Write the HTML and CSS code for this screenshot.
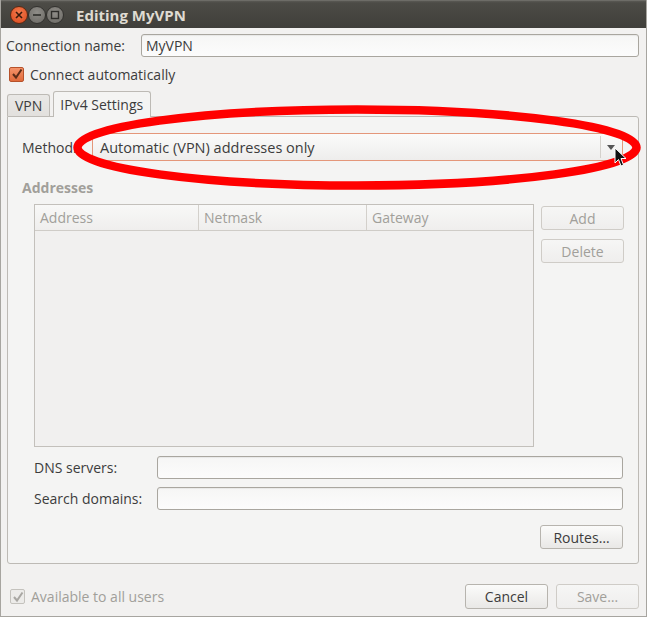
FILE: index.html
```html
<!DOCTYPE html>
<html>
<head>
<meta charset="utf-8">
<link rel="stylesheet" href="styles.css">
</head>
<body>
<div class="window">
  <div class="titlebar">
    <div class="wbtns">
      <span class="wbtn close"><svg width="18" height="18" viewBox="0 0 18 18"><path d="M6 6 L12 12 M12 6 L6 12" stroke="#3a1a0c" stroke-width="1.6"/></svg></span>
      <span class="wbtn"><svg width="18" height="18" viewBox="0 0 18 18"><path d="M5 9 H13" stroke="#2e2d2a" stroke-width="1.6"/></svg></span>
      <span class="wbtn"><svg width="18" height="18" viewBox="0 0 18 18"><rect x="5.5" y="5.5" width="7" height="7" fill="none" stroke="#2e2d2a" stroke-width="1.4"/></svg></span>
    </div>
    <div class="title">Editing MyVPN</div>
  </div>
  <div class="content">
    <div class="row name-row">
      <label class="lbl">Connection name:</label>
      <div class="entry name-entry">MyVPN</div>
    </div>
    <div class="row check-row">
      <span class="check on"><svg width="14" height="14" viewBox="0 0 14 14"><path d="M3 7 L6 10.5 L11.5 2.5" fill="none" stroke="#5b2c18" stroke-width="2"/></svg></span>
      <span class="check-text">Connect automatically</span>
    </div>
    <div class="tabs">
      <div class="tab">VPN</div>
      <div class="tab active">IPv4 Settings</div>
    </div>
    <div class="panel">
      <div class="row method-row">
        <label class="lbl">Method:</label>
        <div class="combo">
          <span class="combo-text">Automatic (VPN) addresses only</span>
          <span class="combo-sep"></span>
          <span class="combo-arrow"></span>
        </div>
      </div>
      <div class="section-title">Addresses</div>
      <div class="addr-area">
        <div class="table">
          <div class="thead">
            <div class="th c1">Address</div>
            <div class="th c2">Netmask</div>
            <div class="th c3">Gateway</div>
          </div>
        </div>
        <div class="side-btns">
          <div class="btn disabled">Add</div>
          <div class="btn disabled">Delete</div>
        </div>
      </div>
      <div class="row field-row dns-row">
        <label class="lbl field-lbl">DNS servers:</label>
        <div class="entry field-entry"></div>
      </div>
      <div class="row field-row">
        <label class="lbl field-lbl">Search domains:</label>
        <div class="entry field-entry"></div>
      </div>
      <div class="routes-row">
        <div class="btn">Routes…</div>
      </div>
    </div>
    <div class="bottom-row">
      <div class="avail">
        <span class="check off"><svg width="14" height="14" viewBox="0 0 14 14"><path d="M3 7 L6 10.5 L11.5 2.5" fill="none" stroke="#a9a7a3" stroke-width="2"/></svg></span>
        <span class="check-text dim">Available to all users</span>
      </div>
      <div class="actions">
        <div class="btn action">Cancel</div>
        <div class="btn action disabled">Save…</div>
      </div>
    </div>
  </div>
</div>
<svg class="overlay" width="647" height="617" viewBox="0 0 647 617">
  <ellipse cx="357" cy="147.5" rx="279.5" ry="38" fill="none" stroke="#ff0000" stroke-width="8.5"/>
</svg>
<svg class="cursor" width="14" height="22" viewBox="0 0 14 22">
  <path d="M1 1 L1 16 L4.5 12.5 L7 19 L9.5 18 L7 11.5 L12 11.5 Z" fill="#111" stroke="#fff" stroke-width="1"/>
</svg>
</body>
</html>
```
FILE: styles.css
```css
* { box-sizing: border-box; }
html, body { margin: 0; padding: 0; }
body {
  width: 647px;
  height: 617px;
  overflow: hidden;
  position: relative;
  font-family: "Open Sans", "DejaVu Sans", sans-serif;
  font-size: 14px;
  color: #3c3c3c;
  background: #f2f1f0;
}
.window {
  width: 647px;
  height: 617px;
  display: flex;
  flex-direction: column;
  border-left: 1px solid #a7a5a0;
  border-right: 1px solid #a7a5a0;
  border-bottom: 1px solid #a7a5a0;
}
.titlebar {
  height: 28px;
  flex: none;
  display: flex;
  align-items: center;
  background: linear-gradient(#5a5954 0px, #4c4b46 2px, #3f3e3a 28px);
  border-top: 1px solid #6d6c67;
}
.wbtns { display: flex; margin-left: 9px; }
.wbtn {
  width: 18px;
  height: 18px;
  border-radius: 50%;
  background: radial-gradient(circle at 50% 35%, #8f8d88, #6a6863);
  border: 1px solid #33322f;
  display: flex;
}
.wbtn svg { margin: -1px; }
.wbtn.close { background: radial-gradient(circle at 50% 35%, #f47a4c, #d9481d); border-color: #5a2a14; }
.title {
  margin-left: 12px;
  color: #dfdbd2;
  font-weight: bold;
  font-size: 15px;
}
.content {
  flex: 1;
  display: flex;
  flex-direction: column;
  padding: 6px 7px 0 5px;
}
.row { display: flex; align-items: center; }
.lbl { white-space: nowrap; }
.name-row { height: 23px; flex: none; }
.name-row .lbl { width: 135px; }
.entry {
  border: 1px solid #a9a69f;
  border-radius: 3px;
  background: linear-gradient(#f6f6f5, #fcfcfc);
  box-shadow: inset 0 1px 1px rgba(0,0,0,0.06);
  height: 23px;
  padding: 0 4px;
  display: flex;
  align-items: center;
}
.name-entry { flex: 1; }
.check-row { margin-top: 9px; height: 16px; padding-left: 3px; flex: none; }
.check {
  width: 15px;
  height: 15px;
  border-radius: 2px;
  display: inline-flex;
  flex: none;
}
.check.on {
  background: linear-gradient(#f5936a, #e06a3b);
  border: 1px solid #b6522b;
}
.check.on svg, .check.off svg { margin: -0.5px; }
.check.off {
  background: #ecebe9;
  border: 1px solid #c4c2bd;
}
.check-text { margin-left: 6px; }
.dim { color: #a19f9a; }
.tabs {
  display: flex;
  align-items: flex-end;
  margin-top: 9px;
  margin-left: 1px;
  height: 25px;
  flex: none;
  position: relative;
  z-index: 1;
}
.tab {
  height: 22px;
  padding: 0 7px;
  display: flex;
  align-items: center;
  background: linear-gradient(#e9e8e6, #e2e0dd);
  border: 1px solid #bdbab5;
  border-bottom: none;
  border-radius: 3px 3px 0 0;
  margin-right: 3px;
}
.tab.active {
  height: 26px;
  margin-bottom: -1px;
  padding: 0 7px 0 6px;
  background: #f4f4f3;
}
.panel {
  margin-left: 1px;
  height: 448px;
  flex: none;
  border: 1px solid #bdbab5;
  border-radius: 0 3px 3px 3px;
  background: #f4f4f3;
  padding: 16px 15px 0 14px;
  display: flex;
  flex-direction: column;
}
.method-row { height: 28px; flex: none; }
.method-row .lbl { width: 70px; }
.combo {
  flex: 1;
  height: 28px;
  border: 1px solid #e4977a;
  border-radius: 3px;
  background: linear-gradient(#fbfbfa, #eeedec);
  display: flex;
  align-items: center;
  padding-left: 7px;
  font-size: 14.5px;
}
.combo-text { flex: 1; }
.combo-sep {
  width: 1px;
  height: 22px;
  background: #d4d1cc;
  margin-right: 6px;
}
.combo-arrow {
  width: 0;
  height: 0;
  border-left: 4px solid transparent;
  border-right: 4px solid transparent;
  border-top: 5px solid #555;
  margin-right: 7px;
}
.section-title {
  margin-top: 18px;
  font-weight: bold;
  color: #a19f9a;
  height: 18px;
  line-height: 18px;
  flex: none;
}
.addr-area {
  display: flex;
  margin-top: 7px;
  padding-left: 12px;
  height: 243px;
  flex: none;
}
.table {
  width: 500px;
  height: 243px;
  border: 1px solid #c3c0bb;
  background: #f1f0ef;
  flex: none;
}
.thead {
  display: flex;
  height: 26px;
  border-bottom: 1px solid #cfccc7;
  background: linear-gradient(#f8f8f7, #efeeed);
}
.th {
  color: #a19f9a;
  padding-left: 5px;
  display: flex;
  align-items: center;
  border-right: 1px solid #d3d0cb;
}
.c1 { width: 164px; }
.c2 { width: 168px; }
.c3 { flex: 1; border-right: none; }
.side-btns {
  margin-left: 7px;
  display: flex;
  flex-direction: column;
  gap: 9px;
  padding-top: 2px;
}
.btn {
  width: 83px;
  height: 24px;
  border: 1px solid #b7b4ae;
  border-radius: 3px;
  background: linear-gradient(#fbfbfa, #e9e8e6);
  display: flex;
  align-items: center;
  justify-content: center;
}
.btn.disabled {
  color: #a19f9a;
  border-color: #cfccc7;
  background: linear-gradient(#f6f6f5, #efeeed);
}
.field-row { height: 23px; padding-left: 12px; margin-top: 8px; flex: none; }
.dns-row { margin-top: 9px; }
.field-lbl { width: 123px; }
.field-entry { flex: 1; }
.routes-row {
  display: flex;
  justify-content: flex-end;
  margin-top: 15px;
}
.bottom-row {
  margin-top: 20px;
  display: flex;
  align-items: center;
  justify-content: space-between;
  height: 25px;
  flex: none;
  padding-left: 4px;
}
.avail { display: flex; align-items: center; }
.actions { display: flex; gap: 8px; }
.btn.action { width: 83px; height: 25px; }
.overlay {
  position: absolute;
  left: 0;
  top: 0;
  pointer-events: none;
}
.cursor {
  position: absolute;
  left: 614px;
  top: 147px;
}
```
